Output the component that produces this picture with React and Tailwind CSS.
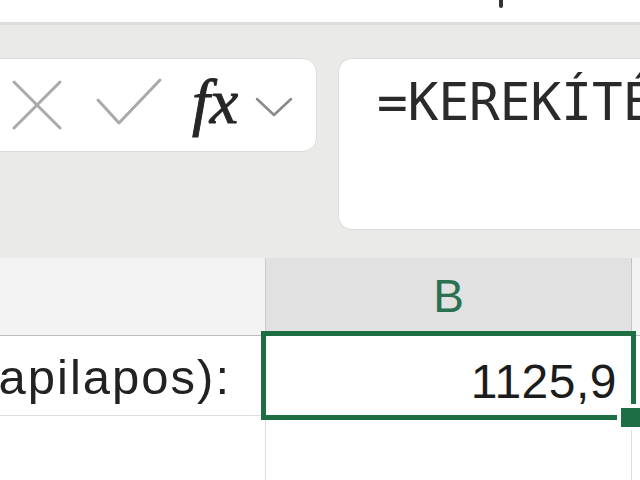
import React from 'react';

function XIcon() {
    return (
        <svg width="52" height="52" viewBox="0 0 52 52" fill="none">
            <path d="M3 3 L49 49 M49 3 L3 49" stroke="#a9a9a9" strokeWidth="3" strokeLinecap="round" />
        </svg>
    );
}

function CheckIcon() {
    return (
        <svg width="66" height="50" viewBox="0 0 66 50" fill="none">
            <path d="M2 22 L23 45 L64 2" stroke="#a9a9a9" strokeWidth="3" strokeLinecap="round" strokeLinejoin="round" />
        </svg>
    );
}

function Chevron() {
    return (
        <svg width="40" height="24" viewBox="0 0 40 24" fill="none">
            <path d="M3 4 L20 20 L37 4" stroke="#8a8a8a" strokeWidth="2.5" strokeLinecap="round" strokeLinejoin="round" />
        </svg>
    );
}

export default function App() {
    const sans = { fontFamily: '"Liberation Sans", Arial, sans-serif' };

    return (
        <div className="w-[640px] h-[480px] overflow-hidden bg-white flex flex-col" style={sans}>
            {/* title strip */}
            <div className="relative h-[22px] shrink-0 bg-white">
                <div className="absolute left-[499px] top-0 w-[4px] h-[8px] bg-[#333] rounded-b-sm" />
            </div>

            {/* formula bar */}
            <div className="h-[236px] shrink-0 bg-[#eaeae8] border-t-[3px] border-[#dcdcda] pt-[33px] flex items-start gap-[21px] overflow-hidden">
                <div className="-ml-[20px] w-[337px] h-[94px] shrink-0 bg-white rounded-[14px] border border-[#dddddb] flex items-center">
                    <div className="ml-[30px]"><XIcon /></div>
                    <div className="ml-[33px] -mt-[4px]"><CheckIcon /></div>
                    <span
                        className="ml-[30px] -mt-[6px] text-[64px] leading-none italic text-[#262626] [-webkit-text-stroke:1px_#262626]"
                        style={{ fontFamily: '"Liberation Serif", "Times New Roman", serif' }}
                    >
                        fx
                    </span>
                    <div className="ml-[16px] mt-[4px]"><Chevron /></div>
                </div>
                <div className="flex-1 h-[172px] bg-white rounded-l-[14px] border border-r-0 border-[#dddddb] pl-[38px] pt-[15px] overflow-hidden">
                    <div
                        className="text-[51px] leading-[58px] text-[#2a2a2a] whitespace-nowrap"
                        style={{ fontFamily: '"DejaVu Sans Mono", "Liberation Mono", monospace' }}
                    >
                        =KEREKÍTÉS(B1;1)
                    </div>
                </div>
            </div>

            {/* grid */}
            <div className="relative flex-1 flex flex-col bg-white">
                <div className="h-[78px] shrink-0 flex border-b border-[#bdbdbd]">
                    <div className="w-[266px] shrink-0 bg-[#f3f3f3] border-r border-[#cacaca]" />
                    <div className="w-[366px] shrink-0 bg-[#e1e1e1] border-r border-[#c4c4c4] flex items-center justify-center text-[46px] text-[#2a7152]">
                        B
                    </div>
                    <div className="flex-1 bg-[#f3f3f3]" />
                </div>
                <div className="h-[80px] shrink-0 flex border-b border-[#dedede]">
                    <div className="w-[266px] shrink-0 border-r border-[#dedede] flex items-center justify-end pr-[34px] pt-[4px] overflow-hidden text-[49px] tracking-[2px] text-[#222] whitespace-nowrap">
                        (kapilapos):
                    </div>
                    <div className="w-[366px] shrink-0 border-r border-[#dedede] flex items-center justify-end pr-[14px] pt-[12px] text-[48px] tracking-[0.5px] text-[#1c1c1c]">
                        1125,9
                    </div>
                    <div className="flex-1" />
                </div>
                <div className="flex-1 flex">
                    <div className="w-[266px] shrink-0 border-r border-[#dedede]" />
                    <div className="w-[366px] shrink-0 border-r border-[#dedede]" />
                    <div className="flex-1" />
                </div>

                {/* selection */}
                <div className="absolute left-[261px] top-[73px] w-[375px] h-[89px] border-[5px] border-[#1e6e44]" />
                <div className="absolute left-[617px] top-[146px] w-[26px] h-[26px] bg-white" />
                <div className="absolute left-[621px] top-[150px] w-[19px] h-[19px] bg-[#1e6e44]" />
            </div>
        </div>
    );
}
